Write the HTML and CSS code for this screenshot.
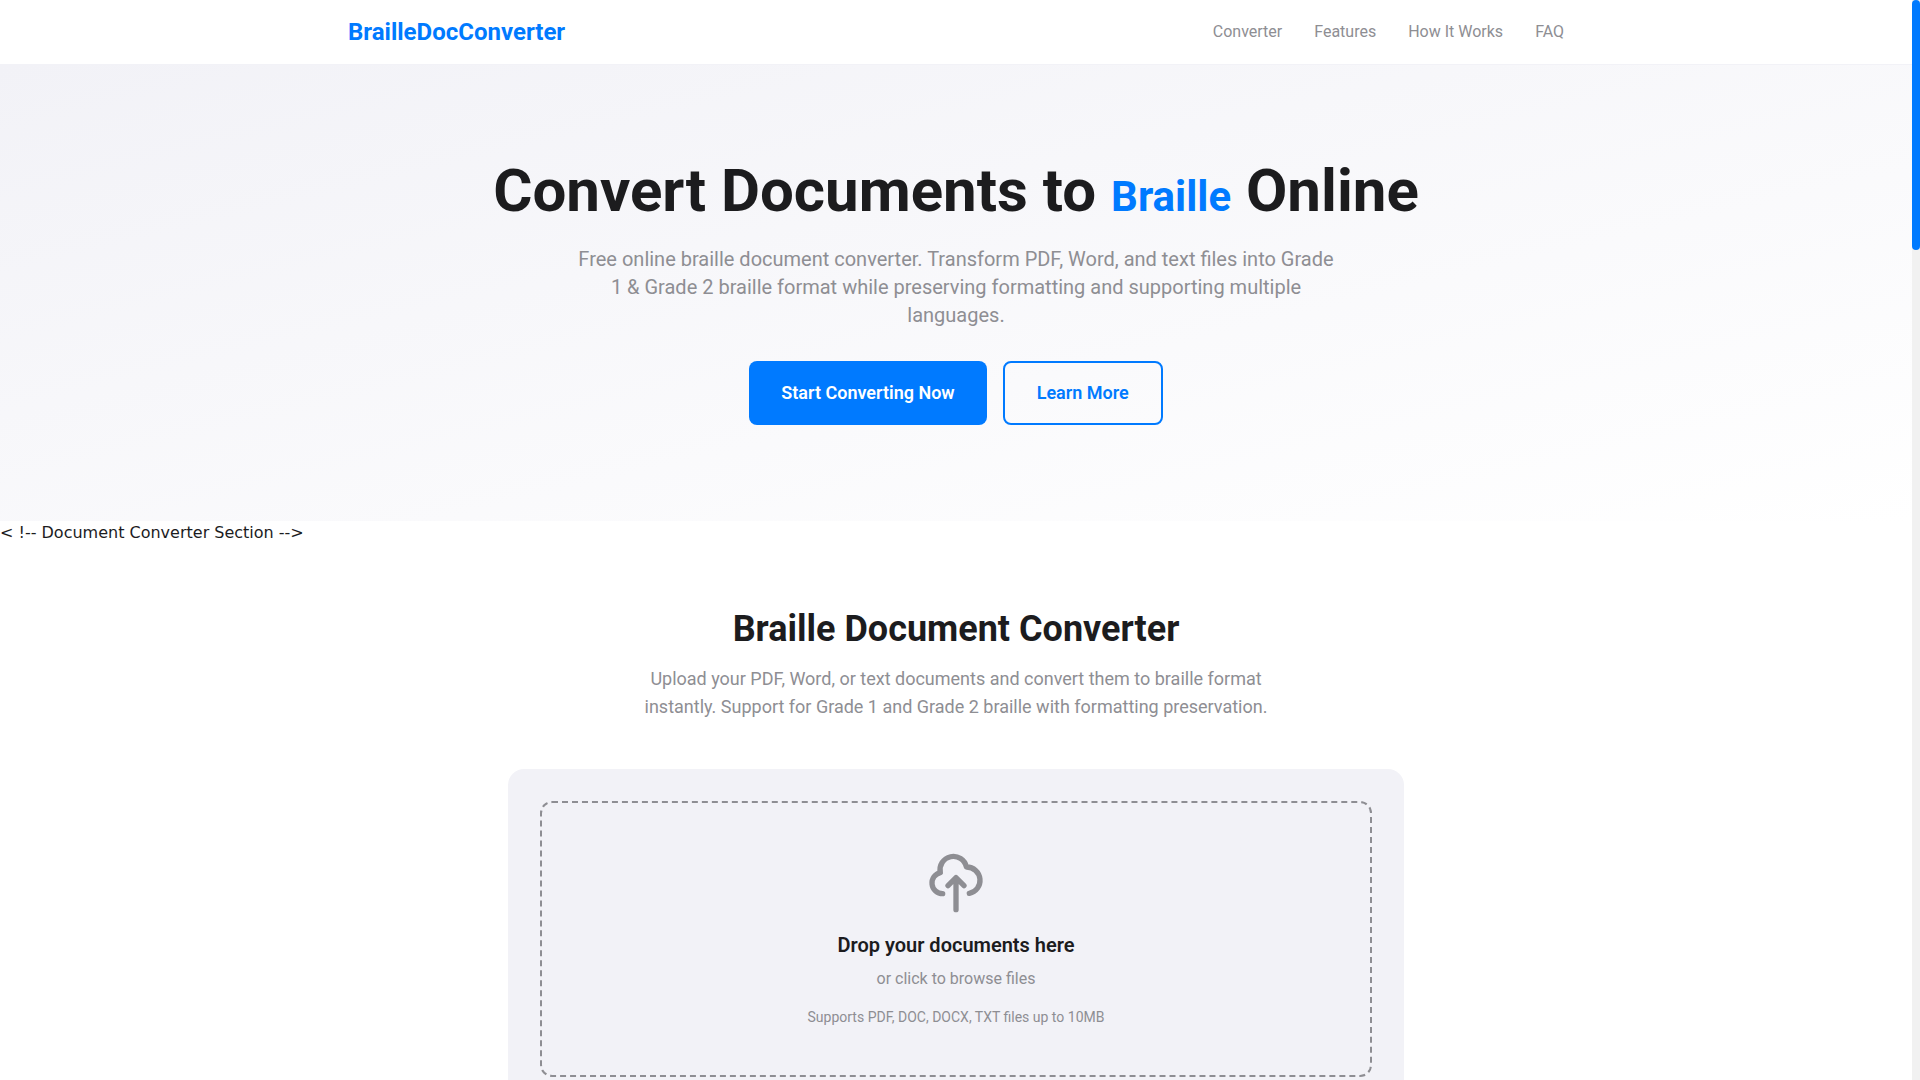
FILE: index.html
```html
<!DOCTYPE html>
<html lang="en">
<head>
<meta charset="utf-8">
<meta name="viewport" content="width=device-width, initial-scale=1">
<title>BrailleDocConverter</title>
<link rel="stylesheet" href="styles.css">
</head>
<body>
<div class="page">
  <header class="header">
    <div class="header-inner">
      <a class="logo" href="#">BrailleDocConverter</a>
      <nav class="nav">
        <a href="#converter">Converter</a>
        <a href="#features">Features</a>
        <a href="#how">How It Works</a>
        <a href="#faq">FAQ</a>
      </nav>
    </div>
  </header>
  <section class="hero">
    <h1 class="hero-title">Convert Documents to <span class="accent">Braille</span> Online</h1>
    <p class="hero-text">Free online braille document converter. Transform PDF, Word, and text files into Grade 1 &amp; Grade 2 braille format while preserving formatting and supporting multiple languages.</p>
    <div class="actions">
      <button class="btn btn-primary" type="button">Start Converting Now</button>
      <button class="btn btn-outline" type="button">Learn More</button>
    </div>
  </section>
  <div class="note">&lt; !-- Document Converter Section --&gt;</div>
  <main class="converter" id="converter">
    <h2 class="section-title">Braille Document Converter</h2>
    <p class="section-text">Upload your PDF, Word, or text documents and convert them to braille format instantly. Support for Grade 1 and Grade 2 braille with formatting preservation.</p>
    <div class="card">
      <label class="dropzone" for="file">
        <svg class="cloud" viewBox="0 0 24 24" fill="none" stroke="currentColor" stroke-width="2" stroke-linecap="round" stroke-linejoin="round" aria-hidden="true"><path d="M7 16a4 4 0 01-.88-7.903A5 5 0 1115.9 6L16 6a5 5 0 011 9.9M15 13l-3-3m0 0l-3 3m3-3v12"/></svg>
        <span class="drop-title">Drop your documents here</span>
        <span class="drop-text">or click to browse files</span>
        <span class="drop-hint">Supports PDF, DOC, DOCX, TXT files up to 10MB</span>
      </label>
      <input class="file" id="file" type="file" accept=".pdf,.doc,.docx,.txt">
    </div>
  </main>
</div>
<div class="scroll-track" aria-hidden="true">
  <div class="scroll-thumb"></div>
</div>
</body>
</html>
```

FILE: styles.css
```css
* {
  box-sizing: border-box;
}

body,
h1,
h2,
p {
  margin: 0;
}

body {
  display: flex;
  height: 100vh;
  background: #fff;
  color: #1c1c1e;
  font-family: Roboto, sans-serif;
  font-size: 16px;
  line-height: 24px;
}

a {
  color: inherit;
  text-decoration: none;
}

.page {
  flex: 1;
  min-width: 0;
  overflow-y: auto;
  scrollbar-width: none;
}

.scroll-track {
  flex: none;
  width: 8px;
  background: #f1f1f1;
}

.scroll-thumb {
  height: 250px;
  background: #007aff;
  border-radius: 4px;
}

.header {
  background: #fff;
  border-bottom: 1px solid #f2f2f7;
}

.header-inner {
  display: flex;
  align-items: center;
  justify-content: space-between;
  max-width: 1280px;
  margin: 0 auto;
  padding: 16px 32px;
}

.logo {
  color: #007aff;
  font-size: 24px;
  font-weight: 700;
  line-height: 32px;
}

.nav {
  display: flex;
  gap: 32px;
  color: #8e8e93;
}

.hero {
  padding: 96px 32px;
  background: linear-gradient(to bottom right, #f2f2f7, #fff);
  text-align: center;
}

.hero-title {
  font-size: 60px;
  font-weight: 700;
  line-height: 60px;
}

.accent {
  color: #007aff;
  font-size: 42px;
  line-height: 42px;
}

.hero-text {
  max-width: 768px;
  margin: 24px auto 32px;
  color: #8e8e93;
  font-size: 20px;
  line-height: 28px;
}

.actions {
  display: flex;
  justify-content: center;
  gap: 16px;
}

.btn {
  padding: 16px 32px;
  border: 0;
  border-radius: 8px;
  font: 600 18px/28px Roboto, sans-serif;
}

.btn-primary {
  background: #007aff;
  color: #fff;
}

.btn-outline {
  border: 2px solid #007aff;
  background: transparent;
  color: #007aff;
}

.note {
  font-family: "DejaVu Sans", sans-serif;
}

.converter {
  padding: 64px 32px;
  text-align: center;
}

.section-title {
  font-size: 36px;
  font-weight: 700;
  line-height: 40px;
}

.section-text {
  max-width: 672px;
  margin: 16px auto 48px;
  color: #8e8e93;
  font-size: 18px;
  line-height: 28px;
}

.card {
  max-width: 896px;
  margin: 0 auto;
  padding: 32px;
  background: #f2f2f7;
  border-radius: 16px;
}

.dropzone {
  display: flex;
  flex-direction: column;
  align-items: center;
  padding: 48px;
  border: 2px dashed #8e8e93;
  border-radius: 12px;
  color: #8e8e93;
  cursor: pointer;
}

.cloud {
  width: 64px;
  height: 64px;
  margin-bottom: 16px;
}

.drop-title {
  margin-bottom: 8px;
  color: #1c1c1e;
  font-size: 20px;
  font-weight: 600;
  line-height: 28px;
}

.drop-text {
  margin-bottom: 16px;
}

.drop-hint {
  font-size: 14px;
  line-height: 20px;
}

.file {
  display: none;
}
```
